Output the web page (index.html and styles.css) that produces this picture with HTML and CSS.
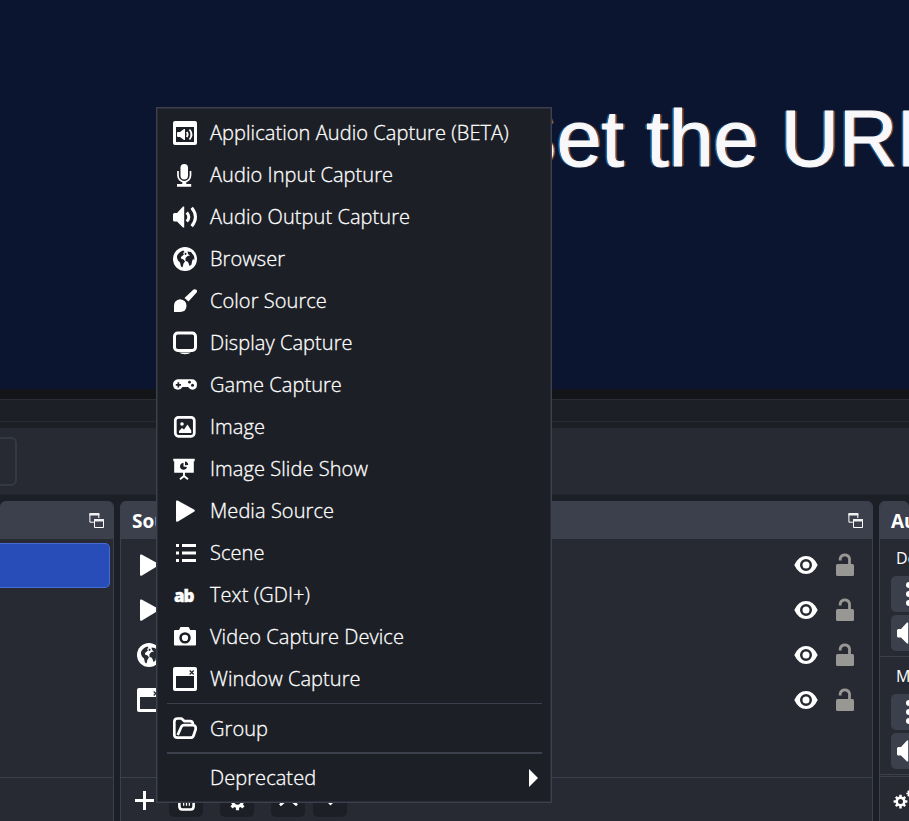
FILE: index.html
```html
<!DOCTYPE html>
<html lang="en">
<head>
<meta charset="utf-8">
<title>Sources</title>
<link rel="stylesheet" href="styles.css">
</head>
<body>
<svg class="defs" aria-hidden="true">
  <symbol id="app" viewBox="0 0 24 24"><path fill-rule="evenodd" d="M2 0h20a2 2 0 0 1 2 2v20a2 2 0 0 1-2 2H2a2 2 0 0 1-2-2V2a2 2 0 0 1 2-2zM3 6v15h18V6z"/><path d="M4 12q0-1 1-1h2l4-3h1v11h-1l-4-3H5q-1 0-1-1z"/><path class="ln" stroke-width="1.800" d="M13.700 11q2 2.500 0 5M16.500 8.500q4 5 0 10"/></symbol>
  <symbol id="mic" viewBox="0 0 24 24"><rect x="7.500" y="1" width="7.500" height="15.500" rx="3.700"/><path class="ln" stroke-width="1.700" d="M5 8v4.500a6.200 6.200 0 0 0 12.500 0V8"/><path d="M9.300 18h4v3h4.900v2.800H4V21h5.300z"/></symbol>
  <symbol id="speaker" viewBox="0 0 24 24"><path d="M0 9.500q0-1.500 1.500-1.500H4l6-6.500h1.200v21H10L4 16.500H1.500Q0 16.500 0 15z"/><path class="ln" stroke-width="3" d="M13.800 7.500q4 4.600 0 9"/><path class="ln" stroke-width="3" d="M18.700 2.800q7.500 9.200 0 18.500"/></symbol>
  <symbol id="globe" viewBox="0 0 24 24"><circle cx="12" cy="12" r="12"/><path class="cut" d="M4 9q2-4.500 6.500-5.500l1 1.500-1.500 1 1 1.500-3 2.500v1.500l2.500 1 1.500 2-1.500 2-1 4-1.500-1-1-4-2-2-1-2.500zM12 5.500l1.700 1-.7 1.500-1.500-.5zM14.500 4.500l3.500.5 3 4 .5 4-1.500-1-1 2.500-.5 3-2 1.500-1-3-1-1.500-2-.5V11l2-2 2.500-.5-2-1.500z"/></symbol>
  <symbol id="brush" viewBox="0 0 24 24"><path d="M1 23v-6.500q.3-5.500 6-6.200 6.500.7 6.500 6.500 0 6.200-6.500 6.200zM11.500 9 20.500.6q1.500-1 2.900.2 1.200 1.200.2 2.700L15.500 12.500z"/></symbol>
  <symbol id="display" viewBox="0 0 24 24"><rect class="ln" stroke-width="3" x="1.500" y="2" width="21" height="17.500" rx="3.200"/><path d="M6 21.500h12q-2 1.800-6 1.800t-6-1.800z"/></symbol>
  <symbol id="pad" viewBox="0 0 24 24"><path d="M5 6.300h14a5 5 0 0 1 5 5q0 5.400-4.500 5.400-2.500 0-4.500-2.700H9.500Q8 16.700 5 16.700.3 16.500 0 11.700a5 5 0 0 1 5-5.400z"/><path class="cut" d="M4.500 9.300h1.700V11h1.700v1.700H6.200v1.700H4.500v-1.700H2.800V11h1.700z"/><circle class="cut" cx="16.500" cy="9.200" r="1.400"/><circle class="cut" cx="19.500" cy="12.300" r="1.500"/></symbol>
  <symbol id="image" viewBox="0 0 24 24"><rect class="ln" stroke-width="2.700" x="2.300" y="2.300" width="19" height="19" rx="3.200"/><circle cx="9" cy="9" r="1.800"/><path d="M6 18v-2l3-3 2 1.500 3.500-5 3.800 6V18z"/></symbol>
  <symbol id="slides" viewBox="0 0 24 24"><path d="M.3 1.800h21.400v2.500h-.9v11.500H1.200V4.300H.3z"/><path class="ln" stroke-width="1.900" d="M11 15v4l-4 3.300M11 19l4 3.300"/><path class="cut" d="M10.500 5.800v3.600l3.400.7q-.5 2.700-3.200 2.700-3.300 0-3.700-3.200 0-3 3.500-3.800zM12 4.500q3 .4 3.200 3.400L12 8.200z"/></symbol>
  <symbol id="play" viewBox="0 0 24 24"><path d="M3 2.500Q3 1 4.600 1.600L21 10.600q1.700 1 0 2.200L5 22.600Q3 23.300 3 21.500z"/></symbol>
  <symbol id="list" viewBox="0 0 24 24"><path d="M3 3h3v3H3zm6 0h14v3H9zM3 10.600h3v3H3zm6 0h14v3H9zM3 18h3v3H3zm6 0h14v3H9z"/></symbol>
  <symbol id="camera" viewBox="0 0 24 24"><path fill-rule="evenodd" d="M7.500 2h8.200l1.500 3H22q1 0 1 1v13.500q0 1-1 1H2q-1 0-1-1V6q0-1 1-1h4zM12 7.200a5.700 5.700 0 1 0 0 11.400 5.700 5.700 0 0 0 0-11.400z"/><circle cx="12" cy="12.900" r="3.100"/></symbol>
  <symbol id="window" viewBox="0 0 24 24"><path fill-rule="evenodd" d="M2 0h20q2 0 2 2v20q0 2-2 2H2q-2 0-2-2V2Q0 0 2 0zM3 9v12h18V9z"/><path class="cutln" d="m16.700 3.500 4 4m0-4-4 4"/></symbol>
  <symbol id="folder" viewBox="0 0 24 24"><path class="ln" stroke-width="2.700" stroke-linejoin="round" d="M4.500 20.700q-3.200 0-3.200-3V5Q1.300 1.500 4.500 1.500h4l3 2.700H17q3 0 3 3.800M4.500 20.700h13.200q2.200 0 2.900-2.200l2-6q.6-4-2.600-4.300h-9q-2 0-3 2.300L4.700 18"/></symbol>
  <symbol id="eye" viewBox="0 0 24 24"><path fill-rule="evenodd" d="M.3 12Q4.500 3 12 3t11.700 9Q19.500 21 12 21T.3 12zM12 6a6 6 0 1 0 0 12 6 6 0 0 0 0-12z"/><circle cx="12" cy="12" r="3.500"/></symbol>
  <symbol id="lock" viewBox="0 0 18 24"><rect y="12" width="18" height="12" rx="1.500"/><path class="ln" stroke-width="2.800" d="M13.500 13V6.500a4.800 4.800 0 0 0-9.300 0v2"/></symbol>
  <symbol id="float" viewBox="0 0 16 16"><path class="ln" stroke-width="1" d="M.9 1v8.200h4M9.800 5V1M5.500 7v7.500h9V7z"/><path d="M.4 0h10v2.500H.4zM5 6h10v2.500H5z"/></symbol>
  <symbol id="gear" viewBox="0 0 24 24"><path class="ln" stroke-width="4" d="M12 1v22M1 12h22M4.500 4.500l15 15M19.500 4.500l-15 15"/><circle cx="12" cy="12" r="8"/><circle class="cut" cx="12" cy="12" r="4"/></symbol>
</svg>

<div class="preview"><span class="preview-text">Set the URL</span></div>
<div class="splitter"></div>
<div class="strip"></div>
<div class="toolbar"><div class="field"></div></div>

<main class="docks">
  <section class="dock scenes">
    <header><svg class="float"><use href="#float"/></svg></header>
    <div class="body"><div class="selected"></div></div>
    <footer></footer>
  </section>
  <section class="dock sources">
    <header><h2>Sources</h2><svg class="float"><use href="#float"/></svg></header>
    <div class="body">
      <div class="source"><svg class="ic"><use href="#play"/></svg><svg class="ic eye"><use href="#eye"/></svg><svg class="lock"><use href="#lock"/></svg></div>
      <div class="source"><svg class="ic"><use href="#play"/></svg><svg class="ic eye"><use href="#eye"/></svg><svg class="lock"><use href="#lock"/></svg></div>
      <div class="source"><svg class="ic"><use href="#globe"/></svg><svg class="ic eye"><use href="#eye"/></svg><svg class="lock"><use href="#lock"/></svg></div>
      <div class="source"><svg class="ic"><use href="#window"/></svg><svg class="ic eye"><use href="#eye"/></svg><svg class="lock"><use href="#lock"/></svg></div>
    </div>
    <footer>
      <span class="plus"></span>
      <span class="btn b1"><svg viewBox="0 0 20 20"><path class="ln" stroke-width="2.700" d="M2.500 5v10q0 3.500 3 3.500h9q3 0 3-3.500V5"/><path class="ln" stroke-width="1.300" d="M7 5v9.500M10 5v9.500M13 5v9.500"/></svg></span>
      <span class="btn b2"><svg><use href="#gear"/></svg></span>
      <span class="btn b3"><svg viewBox="0 0 20 20"><path class="ln" stroke-width="3" d="m1 14 9-8 9 8"/></svg></span>
      <span class="btn b4"><svg viewBox="0 0 20 20"><path class="ln" stroke-width="3" d="m2 4 8 8 8-8"/></svg></span>
    </footer>
  </section>
  <section class="dock mixer">
    <header><h2>Audio Mixer</h2></header>
    <div class="channel"><p>Desktop Audio</p><div class="tile dots"><i></i><i></i><i></i></div><div class="tile"><svg class="ic"><use href="#speaker"/></svg></div></div>
    <div class="channel"><p>Mic/Aux</p><div class="tile dots"><i></i><i></i><i></i></div><div class="tile"><svg class="ic"><use href="#speaker"/></svg></div></div>
    <footer><svg class="g1"><use href="#gear"/></svg><svg class="g2"><use href="#gear"/></svg></footer>
  </section>
</main>

<nav class="menu">
  <div class="item"><svg class="ic"><use href="#app"/></svg><span>Application Audio Capture (BETA)</span></div>
  <div class="item"><svg class="ic"><use href="#mic"/></svg><span>Audio Input Capture</span></div>
  <div class="item"><svg class="ic"><use href="#speaker"/></svg><span>Audio Output Capture</span></div>
  <div class="item"><svg class="ic"><use href="#globe"/></svg><span>Browser</span></div>
  <div class="item"><svg class="ic"><use href="#brush"/></svg><span>Color Source</span></div>
  <div class="item"><svg class="ic"><use href="#display"/></svg><span>Display Capture</span></div>
  <div class="item"><svg class="ic"><use href="#pad"/></svg><span>Game Capture</span></div>
  <div class="item"><svg class="ic"><use href="#image"/></svg><span>Image</span></div>
  <div class="item"><svg class="ic"><use href="#slides"/></svg><span>Image Slide Show</span></div>
  <div class="item"><svg class="ic"><use href="#play"/></svg><span>Media Source</span></div>
  <div class="item"><svg class="ic"><use href="#list"/></svg><span>Scene</span></div>
  <div class="item"><b class="ic ab">ab</b><span>Text (GDI+)</span></div>
  <div class="item"><svg class="ic"><use href="#camera"/></svg><span>Video Capture Device</span></div>
  <div class="item"><svg class="ic"><use href="#window"/></svg><span>Window Capture</span></div>
  <hr class="thin">
  <div class="item"><svg class="ic"><use href="#folder"/></svg><span>Group</span></div>
  <hr class="thick">
  <div class="item"><i class="ic"></i><span>Deprecated</span><i class="arrow"></i></div>
</nav>
</body>
</html>
```
FILE: styles.css
```css
* { box-sizing: border-box; }
html, body { height: 100%; }
body {
  margin: 0; overflow: hidden; display: flex; flex-direction: column;
  background: #1d1f26; color: #fff; font-family: "Open Sans", sans-serif; --cut: #1d1f26;
}
.defs { position: absolute; width: 0; height: 0; }
svg { display: block; fill: #fff; stroke: none; flex: none; }
.ln { fill: none; stroke: #fff; }
.cut { fill: var(--cut); }
.cutln { fill: none; stroke: var(--cut); stroke-width: 1.2; }
.ic { width: 24px; height: 24px; flex: none; }

.preview { height: 389px; flex: none; background: #0c1530; overflow: hidden; padding: 92px 0 0 503px; }
.preview-text {
  display: block; white-space: nowrap; font: 80.6px/92px "Liberation Sans", sans-serif; color: #f8f8fa;
  -webkit-text-stroke: 1px #f8f8fa;
  text-shadow: -2px 0 1px #1672b8, 2px 0 1px #a0582c;
}
.splitter { height: 11px; flex: none; background: #141519; border-bottom: 1px solid #2a2d35; }
.strip { height: 22px; flex: none; border-bottom: 1px solid #272a33; }
.toolbar { height: 67px; flex: none; margin-top: 6px; background: #272a33; border-bottom: 1px solid #23262e; padding-top: 9px; }
.field { width: 17px; height: 49px; border: 2px solid #353944; border-left: 0; border-radius: 0 6px 6px 0; }

.docks { flex: 1; min-height: 0; display: flex; gap: 6px; margin-top: 6px; }
.dock { display: flex; flex-direction: column; background: #272a33; border-radius: 6px 6px 0 0; overflow: hidden; border-right: 1px solid #3c404d; }
.dock header { height: 38px; flex: none; background: #3c404d; display: flex; align-items: center; justify-content: space-between; margin-right: -1px; padding-right: 9px; }
.scenes { width: 114px; }
.scenes header { justify-content: flex-end; }
h2 { margin: 1px 0 0; padding-left: 12px; font-size: 19px; line-height: 38px; white-space: nowrap; }
.float { width: 16px; height: 16px; fill: #f0f0f0; margin-top: 2px; }
.body { flex: 1; min-height: 0; }
.dock footer { height: 44px; flex: none; border-top: 1px solid #3c404d; display: flex; align-items: center; }
.selected { height: 45px; width: 110px; margin-top: 4px; background: #284cb8; border: 1px solid #476bd7; border-left: 0; border-radius: 0 5px 5px 0; }
.sources { width: 753px; border-left: 1px solid #3c404d; --cut: #272a33; }
.sources header, .mixer header { margin-left: -1px; }
.sources .body { padding-top: 3px; }
.source { height: 45px; display: flex; align-items: center; padding: 0 18px 0 16px; }
.eye { margin-left: auto; }
.lock { width: 18px; height: 24px; margin-left: 18px; margin-top: -1px; fill: #999793; }
#lock .ln { stroke: #999793; }
.plus { width: 19px; height: 19px; margin: 1px 0 0 14px; background: linear-gradient(#fff, #fff) center / 19px 3px no-repeat, linear-gradient(#fff, #fff) center / 3px 19px no-repeat; }
.btn { width: 34px; height: 34px; background: #1d1f26; border-radius: 5px; display: flex; align-items: center; justify-content: center; margin-left: 17px; --cut: #1d1f26; }
.btn svg { width: 19px; height: 19px; margin-top: 4px; }
.b1 { margin-left: 15px; }
.b4 { margin-left: 8px; }
.mixer { width: 30px; border-right: 0; border-left: 1px solid #3c404d; --cut: #272a33; }
.channel { height: 118px; flex: none; border-bottom: 1px solid #3c404d; padding-left: 11px; }
.channel p { margin: 0; height: 37px; padding: 8px 0 0 5px; font-size: 16px; font-weight: 400; line-height: 22px; white-space: nowrap; }
.tile { width: 36px; height: 36px; background: #3c404d; border-radius: 5px; margin-bottom: 3px; padding: 6px; }
.dots { display: flex; flex-direction: column; align-items: center; gap: 3px; padding: 6px 0 0 0; }
.dots i { width: 6px; height: 6px; border-radius: 50%; background: #fff; flex: none; }
.mixer footer { margin-top: 1px; }
.g1 { width: 15px; height: 15px; margin: 6px 0 0 13px; }
.g2 { width: 9px; height: 9px; margin: -10px 0 0 -2px; }

.menu { position: absolute; left: 156px; top: 107px; width: 396px; height: 696px; background: #1d1f26; border: 1px solid #3c404d; box-shadow: inset 0 0 0 1px #2b2e38; padding: 4px 9px 0 10px; }
.item { height: 42px; display: flex; align-items: center; gap: 13px; padding-left: 6px; padding-right: 4px; font-size: 20px; font-weight: 300; letter-spacing: .07px; white-space: nowrap; }
.item span { line-height: 28px; -webkit-text-stroke: .3px #fff; }
.ab { font: 800 17px/26px "Open Sans", sans-serif; letter-spacing: -1px; padding-left: 1px; -webkit-text-stroke: .4px #fff; }
.menu hr { margin: 0; border: 0; background: #3c404d; }
.menu .thin { height: 1px; margin: 3px 0 4px; }
.menu .thick { height: 2px; margin: 2px 0 3px; }
.arrow { margin-left: auto; border: solid transparent; border-width: 9px 0 9px 9px; border-left-color: #fff; }
```
